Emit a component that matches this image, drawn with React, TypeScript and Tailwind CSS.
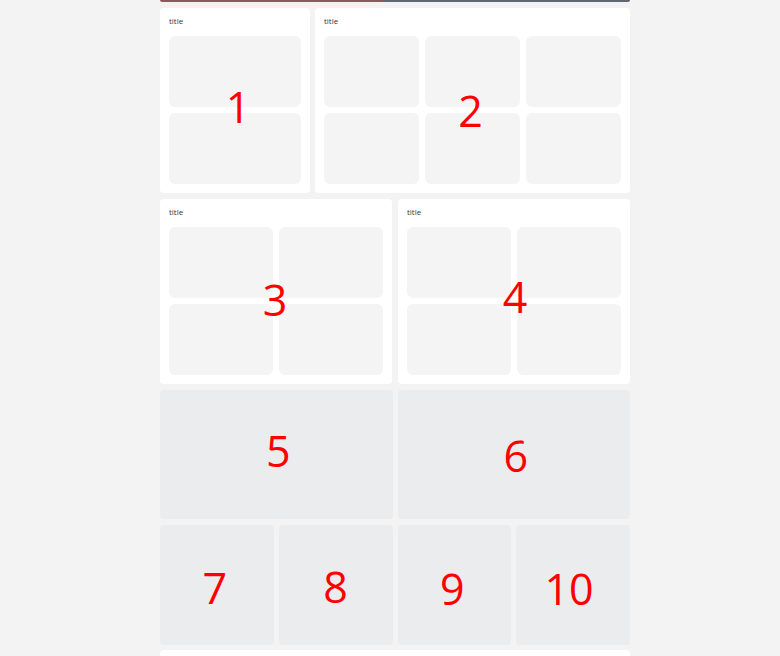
import React from 'react';

// overlay number that sits on top of a card
function Num({ n, className }: { n: string; className: string }) {
  return (
    <div className="pointer-events-none absolute inset-0 flex items-center justify-center">
      <span className={`text-[43px] leading-none text-[#ff0000] ${className}`}>{n}</span>
    </div>
  );
}

function Box() {
  return <div className="h-[71px] rounded-[6px] bg-[#f4f4f4]" />;
}

function TitleCard({
  cols,
  count,
  n,
  numClass,
}: {
  cols: string;
  count: number;
  n: string;
  numClass: string;
}) {
  return (
    <div className="relative rounded-[4px] bg-white px-[9px] pt-[9px] pb-[9px]">
      <div className="mb-[11px] h-[8px] text-[8px] leading-[8px] text-[#333]">title</div>
      <div className={`grid ${cols} gap-[6px]`}>
        {Array.from({ length: count }).map((_, i) => (
          <Box key={i} />
        ))}
      </div>
      <Num n={n} className={numClass} />
    </div>
  );
}

function Tile({ n, h, numClass }: { n: string; h: string; numClass: string }) {
  return (
    <div className={`relative rounded-[4px] bg-[#ebecee] ${h}`}>
      <Num n={n} className={numClass} />
    </div>
  );
}

export default function App() {
  return (
    <div className="min-h-[656px] bg-[#f3f3f3]" style={{ fontFamily: '"Open Sans", "Noto Sans", sans-serif' }}>
      <div className="ml-[160px] flex w-[470px] flex-col">
        {/* bottom edge of the banner above, scrolled out of view */}
        <div className="flex h-[2px] overflow-hidden rounded-b-[2px]">
          <div className="w-[223px] bg-[#8b5b5b]" />
          <div className="flex-1 bg-[#5f6870]" />
        </div>

        <div className="mt-[6px] grid grid-cols-[150px_315px] gap-[5px]">
          <TitleCard cols="grid-cols-1" count={2} n="1" numClass="translate-x-[3px] translate-y-[6px]" />
          <TitleCard cols="grid-cols-3" count={6} n="2" numClass="-translate-x-[2px] translate-y-[10px]" />
        </div>

        <div className="mt-[6px] grid grid-cols-2 gap-[6px]">
          <TitleCard cols="grid-cols-2" count={4} n="3" numClass="-translate-x-[1px] translate-y-[8px]" />
          <TitleCard cols="grid-cols-2" count={4} n="4" numClass="translate-x-[1px] translate-y-[5px]" />
        </div>

        <div className="mt-[6px] grid grid-cols-2 gap-[5px]">
          <Tile n="5" h="h-[129px]" numClass="translate-x-[2px] -translate-y-[4px]" />
          <Tile n="6" h="h-[129px]" numClass="translate-x-[2px] translate-y-[1px]" />
        </div>

        <div className="mt-[6px] grid grid-cols-4 gap-[5px]">
          <Tile n="7" h="h-[120px]" numClass="-translate-x-[2px] translate-y-[2px]" />
          <Tile n="8" h="h-[120px]" numClass="translate-y-[1px]" />
          <Tile n="9" h="h-[120px]" numClass="-translate-x-[2px] translate-y-[3px]" />
          <Tile n="10" h="h-[120px]" numClass="-translate-x-[4px] translate-y-[3px]" />
        </div>

        <div className="mt-[5px] h-[60px] rounded-[4px] bg-white" />
      </div>
    </div>
  );
}
